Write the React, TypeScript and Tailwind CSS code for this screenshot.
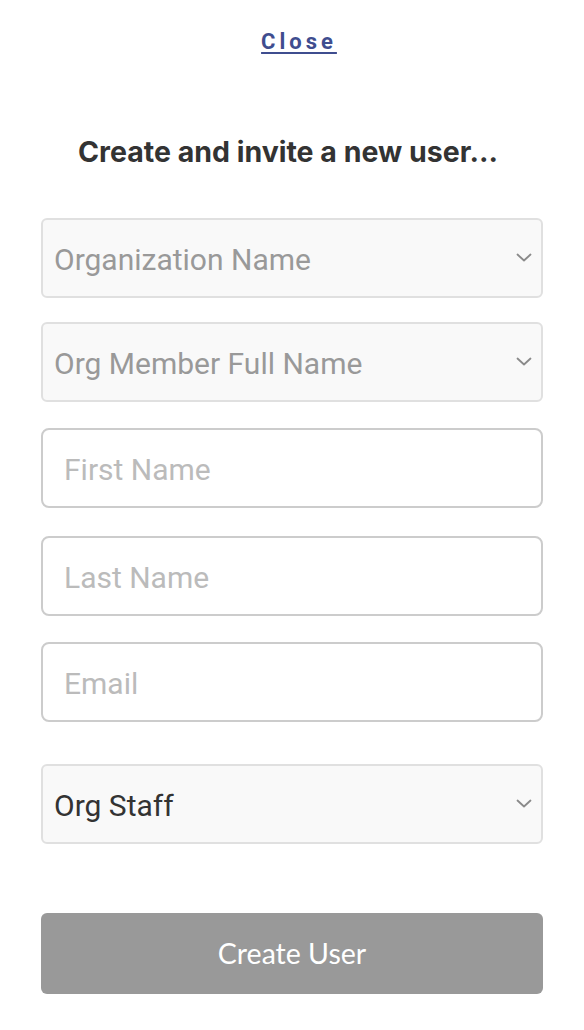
const fieldFont = { fontFamily: 'Roboto, "Liberation Sans", sans-serif' };

function Chevron() {
  return (
    <svg width="16" height="10" viewBox="0 0 16 10" fill="none" className="text-[#8a8a8a]">
      <path d="M1.5 1.5 8 7.5l6.5-6" stroke="currentColor" strokeWidth="1.8" strokeLinecap="round" strokeLinejoin="round" />
    </svg>
  );
}

function SelectBox({ label, muted }: { label: string; muted?: boolean }) {
  return (
    <div className="h-[80px] w-full rounded-[6px] border-2 border-[#e0e0e0] bg-[#f9f9f9] flex items-center justify-between pl-[11px] pr-[9px]">
      <span
        className={`pt-[3px] text-[30px] leading-[36px] ${muted ? 'text-[#999999]' : 'text-[#333333]'}`}
        style={fieldFont}
      >
        {label}
      </span>
      <Chevron />
    </div>
  );
}

function TextBox({ placeholder }: { placeholder: string }) {
  return (
    <input
      placeholder={placeholder}
      className="h-[80px] w-full rounded-[8px] border-2 border-[#cccccc] bg-white px-[21px] pt-[3px] text-[30px] text-[#333333] placeholder:text-[#bbbbbb] outline-none"
      style={fieldFont}
    />
  );
}

export default function App() {
  return (
    <div className="min-h-[1030px] w-[584px] bg-white flex flex-col items-center">
      {/* Close link */}
      <a
        href="#"
        className="mt-[27px] ml-[14px] text-[22px] leading-[30px] font-bold tracking-[4px] text-[#3f4d8f] underline underline-offset-[3px] decoration-2"
        style={{ fontFamily: 'Roboto, "Liberation Sans", sans-serif' }}
      >
        Close
      </a>

      <h2
        className="mt-[77px] mr-[8px] text-[28.5px] leading-[36px] font-bold text-[#333333]"
        style={{ fontFamily: 'Inter, Roboto, sans-serif' }}
      >
        Create and invite a new user...
      </h2>

      <form className="mt-[48px] w-[502px] flex flex-col">
        <SelectBox label="Organization Name" muted />
        <div className="mt-[24px]">
          <SelectBox label="Org Member Full Name" muted />
        </div>
        <div className="mt-[26px]">
          <TextBox placeholder="First Name" />
        </div>
        <div className="mt-[28px]">
          <TextBox placeholder="Last Name" />
        </div>
        <div className="mt-[26px]">
          <TextBox placeholder="Email" />
        </div>
        <div className="mt-[42px]">
          <SelectBox label="Org Staff" />
        </div>
        <button
          type="button"
          className="mt-[69px] h-[81px] w-full rounded-[6px] bg-[#999999] text-white text-[28.5px]"
          style={{ fontFamily: 'Lato, "Open Sans", sans-serif' }}
        >
          Create User
        </button>
      </form>
    </div>
  );
}
